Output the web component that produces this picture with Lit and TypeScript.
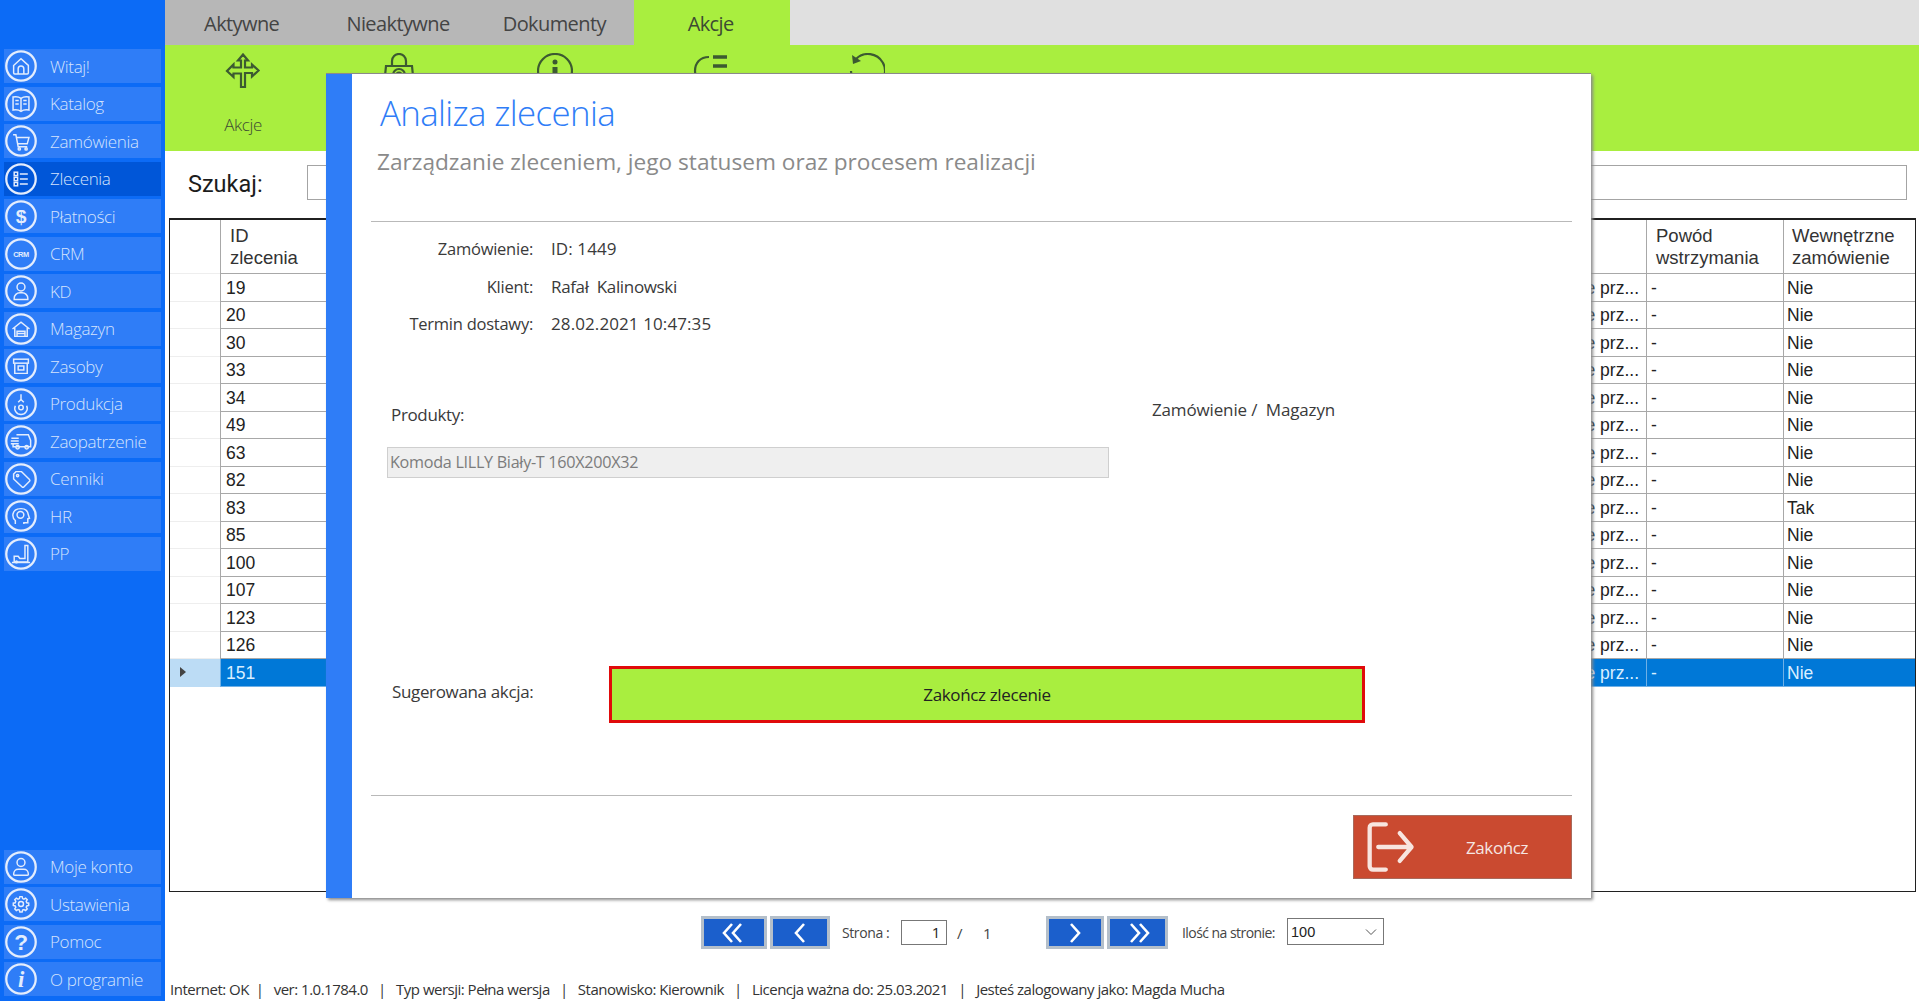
import { LitElement, html, css, svg } from "lit";
import { customElement } from "lit/decorators.js";

const NAV_ICONS: Record<string, unknown> = {
  home: svg`<path d="M8.500 14.500 15 8.500l6.500 6v6.500a1 1 0 0 1-1 1h-11a1 1 0 0 1-1-1z"/><path d="M12.500 22v-4.500a2.500 2.500 0 0 1 5 0V22"/>`,
  book: svg`<path d="M15 10c-2-1.500-4.500-1.700-7-1.200v11.500c2.500-.5 5-.3 7 1.200 2-1.500 4.500-1.700 7-1.200V8.800c-2.500-.5-5-.3-7 1.200z"/><path d="M15 10v11.500M10 12h3M10 15h3M17 12h3M17 15h3"/>`,
  cart: svg`<path d="M8 9.500h2.500L12.500 20h8M11 12h11l-1.500 5.500h-8.500"/><circle cx="13.500" cy="22" r="1"/><circle cx="19.500" cy="22" r="1"/>`,
  list: svg`<rect x="9" y="9" width="3" height="3"/><rect x="9" y="13.500" width="3" height="3"/><rect x="9" y="18" width="3" height="3"/><path d="M14 10.500h7M14 15h7M14 19.500h7"/>`,
  dollar: svg`<text class="g" x="15" y="21.500" text-anchor="middle" font-size="17">$</text>`,
  crm: svg`<text class="g" x="15" y="17.500" text-anchor="middle" font-size="6.500">CRM</text>`,
  kd: svg`<circle cx="15" cy="11.500" r="3.500"/><path d="M9 22.500v-1a5 5 0 0 1 5-5h2a5 5 0 0 1 5 5v1z"/>`,
  mag: svg`<path d="M7.500 15 15 9l7.500 6M9.500 14v7.500h11V14"/><path d="M11.500 21.500v-4.500h7v4.500M11.500 19h7"/>`,
  box: svg`<rect x="8.500" y="9" width="13" height="3.500"/><path d="M9.500 12.500V21.500h11v-9"/><rect x="12.500" y="15" width="5" height="3.500"/>`,
  prod: svg`<path d="M15 6.500v5M12.500 13.500l2.500-2.500 2.500 2.500"/><circle cx="15" cy="18" r="2"/><path d="M10 16.500a5.500 5.500 0 1 0 10 0"/>`,
  truck: svg`<path d="M11 9.500h10.500l2 5v5.500H8V17M6.500 12.500H13M6 15h7M6 17.500h7"/><circle cx="12" cy="20.500" r="1.500"/><circle cx="20" cy="20.500" r="1.500"/>`,
  tag: svg`<path d="M8.500 10.500l2-2h5l7 7a1 1 0 0 1 0 1.500l-5 5a1 1 0 0 1-1.500 0l-7.500-7z"/><circle cx="12" cy="12" r="1"/>`,
  hr: svg`<path d="M10 22v-3c-2-1.500-2.500-3.500-2-6 .7-3 3.500-4.500 7-4.500s6 2 6.500 5.500l1 3-1.500.5V21h-3.500v1"/><circle cx="14.500" cy="14" r="3"/>`,
  pp: svg`<path d="M18.500 7.500h2.500V22H9v-5h3.500l1.500 2h4.500z"/><path d="M7 22.500h16"/><circle cx="11" cy="22" r=".8"/>`,
  user: svg`<circle cx="15" cy="11" r="3.500"/><path d="M8.500 21.500c0-3 2-4.500 4-4.500h5c2 0 4 1.500 4 4.500a.8.8 0 0 1-.8.800H9.300a.8.8 0 0 1-.8-.800z"/>`,
  gear: svg`<circle cx="15" cy="15" r="2.200"/><path d="M14 8.500h2l.4 1.700 1.200.5 1.500-.9 1.400 1.400-.9 1.500.5 1.200 1.700.4v2l-1.700.4-.5 1.200.9 1.500-1.400 1.400-1.500-.9-1.200.5-.4 1.700h-2l-.4-1.700-1.200-.5-1.500.9-1.400-1.400.9-1.500-.5-1.200-1.700-.4v-2l1.700-.4.5-1.200-.9-1.500 1.400-1.400 1.500.9 1.200-.5z"/>`,
  help: svg`<text class="g" x="15" y="22" text-anchor="middle" font-size="20">?</text>`,
  info: svg`<text class="g it" x="15" y="22" text-anchor="middle" font-size="20">i</text>`,
};

const NAV_TOP = [
  ["Witaj!", "home"], ["Katalog", "book"], ["Zamówienia", "cart"], ["Zlecenia", "list"],
  ["Płatności", "dollar"], ["CRM", "crm"], ["KD", "kd"], ["Magazyn", "mag"], ["Zasoby", "box"],
  ["Produkcja", "prod"], ["Zaopatrzenie", "truck"], ["Cenniki", "tag"], ["HR", "hr"], ["PP", "pp"],
];
const NAV_BOTTOM = [
  ["Moje konto", "user"], ["Ustawienia", "gear"], ["Pomoc", "help"], ["O programie", "info"],
];

const RIBBON = [
  svg`<path d="M18 1.500l5 6h-3v7h7v-3l6.500 6-6.500 6v-3.500h-7V34h-4V20.500H8.500V24L2 18l6.500-6.500v3H16v-7h-3z"/>`,
  svg`<path d="M5 13h26l2 20H3z"/><path d="M11 13V8a7 7 0 0 1 14 0v5"/><circle cx="18" cy="22" r="6"/><circle cx="18" cy="22" r="2.500"/>`,
  svg`<circle cx="18" cy="18" r="17"/><circle class="d" cx="18" cy="9" r="2.500"/><rect class="d" x="15.500" y="14" width="5" height="14"/>`,
  svg`<path d="M16 4C7 4 2 10 2 18s6 14 14 14"/><path class="t" d="M20 4h14M20 13h14"/>`,
  svg`<path d="M7 6a17 17 0 1 1-5 12"/><path class="d" d="M3 2l1 9 8-3z"/>`,
];

const ROWS = ["19","20","30","33","34","49","63","82","83","85","100","107","123","126","151"];

@customElement("app-root")
export class AppRoot extends LitElement {
  static styles = css`
    :host { display: block; position: relative; width: 1919px; height: 1001px; overflow: hidden; background: #fff;
      font-family: "Open Sans", "Noto Sans", sans-serif; color: #333; }
    .page { display: flex; height: 1001px; }

    .side { width: 165px; flex: none; background: #0c6bf6; display: flex; flex-direction: column;
      justify-content: space-between; padding: 49px 4px 5px; box-sizing: border-box; }
    .nav { display: flex; flex-direction: column; gap: 3.500px; }
    .item { height: 34px; background: #2f7df7; display: flex; align-items: center; color: #d5e4fd;
      font-size: 17px; font-weight: 300; letter-spacing: -0.35px; }
    .item.on { background: #0056d8; }
    .item span { margin-left: 12px; }
    .ni { width: 34px; height: 34px; flex: none; overflow: visible; }
    .ni circle, .ni path, .ni rect { fill: none; stroke: #e4edfd; stroke-width: 1.300; }
    .ni circle.ring { stroke-width: 2; }
    .ni .g { fill: #e4edfd; font-family: "Liberation Sans", sans-serif; font-weight: 700; }
    .ni .it { font-family: "Liberation Serif", serif; font-style: italic; }

    .main { flex: 1; min-width: 0; display: flex; flex-direction: column; }
    .tabs { height: 45px; display: flex; background: #e0e0e0; flex: none; }
    .tab { width: 156.330px; background: #b7b7b7; display: flex; align-items: center; justify-content: center;
      font-size: 20px; color: #444; letter-spacing: -0.6px; padding-right: 3px; padding-top: 2px; box-sizing: border-box; }
    .tab.on { background: #a9ee3f; color: #3d4a33; }

    .ribbon { height: 106px; flex: none; background: #a9ee3f; display: flex; }
    .rb { width: 156px; display: flex; flex-direction: column; align-items: center; padding-top: 8px; box-sizing: border-box; }
    .rb svg { width: 36px; height: 36px; }
    .rb svg path, .rb svg circle, .rb svg rect { fill: none; stroke: #3c5a31; stroke-width: 2.200; }
    .rb svg .d { fill: #3c5a31; stroke: none; }
    .rb svg .t { stroke-width: 3.500; }
    .rb span { font-size: 17px; font-weight: 300; color: #3d4a33; margin-top: 24px; letter-spacing: -0.4px; }

    .search { height: 67px; flex: none; display: flex; align-items: center; padding: 0 12px 4px 23px; box-sizing: border-box; }
    .search label { font-family: Roboto, sans-serif; font-size: 23.500px; color: #1c1c1c; width: 119px; flex: none; margin-top: 3px; }
    .search .box { flex: 1; height: 35px; border: 1.500px solid #a4a4a4; box-sizing: border-box; }

    .grid { margin-left: 4px; margin-right: 3px; height: 674px; flex: none; border: 1px solid #202020; border-top-width: 2px;
      box-sizing: border-box; font-family: "Liberation Sans", Arial, sans-serif; font-size: 17.500px; color: #222; }
    .r { display: flex; height: 27.500px; }
    .r.h { height: 54px; line-height: 22px; color: #333; font-size: 18.500px; }
    .c { border-left: 1px solid #a8a8a8; border-bottom: 1px solid #a8a8a8; box-sizing: border-box; padding: 1.500px 0 0 5px;
      display: block; line-height: 25px; white-space: nowrap; overflow: hidden; }
    .h .c { padding: 5px 0 0 9px; line-height: 22px; }
    .c.rh { width: 50px; border-left: none; border-bottom-color: #eee; padding: 0; display: flex; align-items: center; }
    .c.id { width: 300px; }
    .c.fill { flex: 1; }
    .c.st { width: 240px; text-align: right; padding-right: 7px; }
    .c.pw { width: 137px; padding-left: 4px; }
    .c.we { width: 132px; padding-left: 3px; }
    .h .c.pw { padding-left: 9px; }
    .h .c.we { padding-left: 8px; }
    .sel .c { background: #0078d7; color: #d9eeff; border-color: #6fb0e6; }
    .sel .c.rh { background: #bcdcf5; border-color: #bcdcf5; }
    .arr { width: 0; height: 0; margin-left: 10px; border-left: 6px solid #444; border-top: 5.500px solid transparent; border-bottom: 5.500px solid transparent; }

    .pager { height: 81px; flex: none; display: flex; align-items: center; padding-left: 536px; font-size: 14px; letter-spacing: -0.4px; color: #444; }
    .pb { width: 66px; height: 33px; box-sizing: border-box; background: #1b5fcc; border: 3px solid #b4bfca; display: flex; align-items: center; justify-content: center; }
    .pb.n { width: 60px; margin-left: 3px; }
    .pb.f { width: 58px; }
    .pb.l { width: 61px; margin-left: 3px; }
    .pb svg { width: 34px; height: 22px; }
    .pb path { fill: none; stroke: #fff; stroke-width: 2.600; }
    .strona { margin-left: 12px; width: 59px; flex: none; }
    .pi { width: 46px; height: 25px; box-sizing: border-box; border: 1px solid #777; background: #fff; text-align: right; padding-right: 6px; line-height: 23px; color: #222; font-size: 15px; }
    .slash { width: 36px; padding-left: 10px; box-sizing: border-box; font-size: 15px; }
    .one { width: 63px; font-size: 15px; }
    .ppl { margin-left: 14px; width: 105px; white-space: nowrap; letter-spacing: -0.55px; }
    .sel-box { width: 97px; height: 27px; box-sizing: border-box; border: 1px solid #777; display: flex; align-items: center; justify-content: space-between; padding: 0 6px 0 3px; font-family: "Liberation Sans", sans-serif; font-size: 14.500px; letter-spacing: 0; color: #222; margin-bottom: 2px; }
    .sel-box svg { width: 12px; height: 8px; }
    .sel-box path { fill: none; stroke: #555; stroke-width: 1; }

    .status { height: 28px; flex: none; padding: 4px 0 0 5px; box-sizing: border-box; font-size: 15px; letter-spacing: -0.5px; color: #333; white-space: pre; line-height: 24px; }

    .modal { position: absolute; left: 326px; top: 73px; width: 1265px; height: 825px; background: #fff; display: flex;
      border-top: 1px solid #8a8a8a; box-sizing: border-box; box-shadow: 2px 2px 3px #8a8a8a; }
    .strip { width: 26px; background: #2f7df7; flex: none; }
    .mc { flex: 1; display: flex; flex-direction: column; padding: 0 19px 19px 19px; min-width: 0; }
    h1 { margin: 15px 0 0 9px; font-size: 34.800px; line-height: 48px; font-weight: 300; color: #2f7df7; letter-spacing: -0.6px; }
    h2 { margin: 9px 0 0 6px; font-size: 22.650px; line-height: 32px; font-weight: 400; color: #8a8a8a; }
    hr { border: none; border-top: 1px solid #b9b9b9; margin: 0; width: 100%; }
    hr.a { margin-top: 43px; }
    .info { display: grid; grid-template-columns: 162px auto; column-gap: 18px; margin-top: 8px; font-size: 16.500px; letter-spacing: -0.25px; color: #3a3a3a; }
    .info div { height: 37.500px; display: flex; align-items: center; white-space: pre; }
    .info .k { justify-content: flex-end; }
    .info .v { font-size: 17px; letter-spacing: 0.1px; }
    .info .v.nm { letter-spacing: -0.35px; }
    .prod { display: flex; margin-top: 50px; font-size: 17px; letter-spacing: -0.15px; color: #3a3a3a; }
    .prod .col { width: 781px; padding-left: 20px; box-sizing: border-box; padding-top: 10px; flex: none; letter-spacing: -0.35px; }
    .prod .mg { white-space: pre; padding-top: 5px; }
    .field { margin: 21px 0 0 16px; width: 722px; height: 32px; box-sizing: border-box; background: #efefef; border: 1px solid #cfcfcf; display: flex; align-items: center; padding-left: 2px; font-size: 16.200px; letter-spacing: -0.3px; color: #7c7c7c; }
    .act { display: flex; margin-top: 188px; align-items: flex-start; font-size: 17px; letter-spacing: -0.35px; color: #3a3a3a; }
    .act .l { width: 238px; padding: 14px 0 0 21px; box-sizing: border-box; flex: none; }
    .go { width: 756px; height: 57px; box-sizing: border-box; border: 3px solid #e00b0b; background: #a9ee3f; display: flex; align-items: center; justify-content: center; color: #222; font-size: 17px; }
    hr.b { margin-top: 72px; }
    .end { align-self: flex-end; margin-top: 19px; width: 219px; height: 65px; background: #ca4a30; display: flex; align-items: center; color: #f5e6e2; font-size: 17px; letter-spacing: -0.4px; border: 1px solid #a86a5c; box-sizing: border-box; }
    .end svg { width: 58px; height: 58px; margin-left: 6px; flex: none; }
    .end path { fill: none; stroke: #f8e5df; stroke-width: 4; stroke-linecap: round; stroke-linejoin: round; }
    .end span { margin-left: 48px; }
  `;

  private navItem(label: string, icon: string) {
    return html`<div class="item ${label === "Zlecenia" ? "on" : ""}">
      <svg class="ni" viewBox="0 0 30 30"><circle class="ring" cx="15" cy="15" r="13"></circle>${NAV_ICONS[icon]}</svg>
      <span>${label}</span>
    </div>`;
  }

  render() {
    return html`
      <div class="page">
        <aside class="side">
          <div class="nav">${NAV_TOP.map(([l, i]) => this.navItem(l, i))}</div>
          <div class="nav">${NAV_BOTTOM.map(([l, i]) => this.navItem(l, i))}</div>
        </aside>
        <div class="main">
          <div class="tabs">
            <div class="tab">Aktywne</div><div class="tab">Nieaktywne</div><div class="tab">Dokumenty</div><div class="tab on">Akcje</div>
          </div>
          <div class="ribbon">
            ${RIBBON.map((ic, i) => html`<div class="rb"><svg viewBox="0 0 36 36">${ic}</svg>${i === 0 ? html`<span>Akcje</span>` : ""}</div>`)}
          </div>
          <div class="search"><label>Szukaj:</label><div class="box"></div></div>
          <div class="grid">
            <div class="r h">
              <div class="c rh"></div>
              <div class="c id">ID<br />zlecenia</div>
              <div class="c fill"></div>
              <div class="c st"></div>
              <div class="c pw">Powód<br />wstrzymania</div>
              <div class="c we">Wewnętrzne<br />zamówienie</div>
            </div>
            ${ROWS.map((id) => html`<div class="r ${id === "151" ? "sel" : ""}">
              <div class="c rh">${id === "151" ? html`<i class="arr"></i>` : ""}</div>
              <div class="c id">${id}</div>
              <div class="c fill"></div>
              <div class="c st">Oczekuje prz...</div>
              <div class="c pw">-</div>
              <div class="c we">${id === "83" ? "Tak" : "Nie"}</div>
            </div>`)}
          </div>
          <div class="pager">
            <div class="pb"><svg viewBox="0 0 34 22"><path d="M15 2 7 11l8 9M24 2l-8 9 8 9"/></svg></div>
            <div class="pb n"><svg viewBox="0 0 34 22"><path d="M21 2l-8 9 8 9"/></svg></div>
            <div class="strona">Strona :</div>
            <div class="pi">1</div>
            <div class="slash">/</div>
            <div class="one">1</div>
            <div class="pb f"><svg viewBox="0 0 34 22"><path d="M13 2l8 9-8 9"/></svg></div>
            <div class="pb l"><svg viewBox="0 0 34 22"><path d="M10 2l8 9-8 9M19 2l8 9-8 9"/></svg></div>
            <div class="ppl">Ilość na stronie:</div>
            <div class="sel-box">100<svg viewBox="0 0 12 8"><path d="M1 1.500l5 5 5-5"/></svg></div>
          </div>
          <div class="status">Internet: OK  |   ver: 1.0.1784.0   |   Typ wersji: Pełna wersja   |   Stanowisko: Kierownik   |   Licencja ważna do: 25.03.2021   |   Jesteś zalogowany jako: Magda Mucha</div>
        </div>
      </div>
      <div class="modal">
        <div class="strip"></div>
        <div class="mc">
          <h1>Analiza zlecenia</h1>
          <h2>Zarządzanie zleceniem, jego statusem oraz procesem realizacji</h2>
          <hr class="a" />
          <div class="info">
            <div class="k">Zamówienie:</div><div class="v">ID: 1449</div>
            <div class="k">Klient:</div><div class="v nm">Rafał  Kalinowski</div>
            <div class="k">Termin dostawy:</div><div class="v">28.02.2021 10:47:35</div>
          </div>
          <div class="prod">
            <div class="col">Produkty:</div>
            <div class="mg">Zamówienie /  Magazyn</div>
          </div>
          <div class="field">Komoda LILLY Biały-T 160X200X32</div>
          <div class="act">
            <div class="l">Sugerowana akcja:</div>
            <div class="go">Zakończ zlecenie</div>
          </div>
          <hr class="b" />
          <div class="end">
            <svg viewBox="0 0 54 54"><path d="M24 6H12a3 3 0 0 0-3 3v36a3 3 0 0 0 3 3h12M17 27h30M37 14l11 13-11 13"/></svg>
            <span>Zakończ</span>
          </div>
        </div>
      </div>
    `;
  }
}
